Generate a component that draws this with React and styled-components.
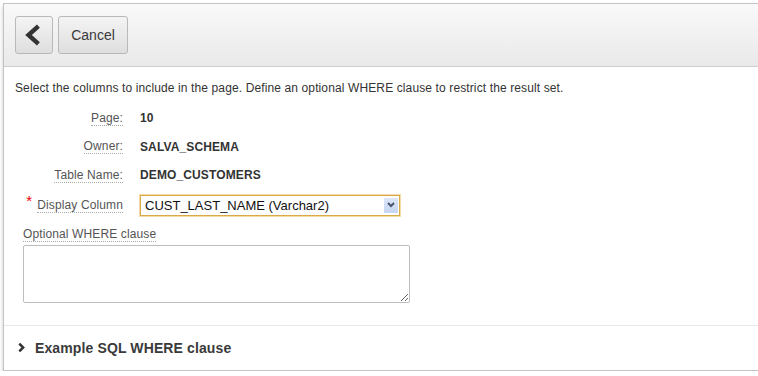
import React from 'react'
import styled, { createGlobalStyle } from 'styled-components'

const Global = createGlobalStyle`
    body {
        margin: 0;
        background: #fff;
        font-family: Arial, "Liberation Sans", sans-serif;
        font-size: 12px;
        letter-spacing: 0.12px;
        color: #333;
    }
`

const Panel = styled.div`
    margin: 3px 0 0 3px;
    border: 1px solid #c4c4c4;
    border-right: none;
    background: #fff;
    box-shadow: 0 3px 4px rgba(0, 0, 0, 0.22);
`

const Header = styled.div`
    display: flex;
    gap: 5px;
    padding: 12px 11px 12px 11px;
    height: 38px;
    background: linear-gradient(#f9f9f9, #e9e9e9);
    border-bottom: 1px solid #cfcfcf;
`

const Button = styled.button`
    display: flex;
    align-items: center;
    justify-content: center;
    height: 38px;
    width: ${(p) => p.w}px;
    padding: 0;
    border: 1px solid #b9b9b9;
    border-radius: 3px;
    background: linear-gradient(#f4f4f4, #dedede);
    font-family: Arial, "Liberation Sans", sans-serif;
    font-size: 14px;
    color: #3a3a3a;
`

const Body = styled.div`
    padding: 14px 11px 22px 11px;
    border-bottom: 1px solid #e8e8e8;
`

const Intro = styled.p`
    margin: 0 0 8px 0;
    line-height: 15px;
    color: #333;
`

const Row = styled.div`
    display: grid;
    grid-template-columns: 108px 1fr;
    column-gap: 17px;
    align-items: center;
    height: ${(p) => p.h || 28.5}px;
`

const Label = styled.div`
    display: flex;
    justify-content: flex-end;
    align-items: flex-start;
    gap: 5px;
    color: #555;
`

const Dotted = styled.span`
    border-bottom: 1px dotted #aaa;
    line-height: 14px;
`

const Star = styled.span`
    color: #e00;
    font-size: 15px;
    line-height: 10px;
    margin-top: -2px;
`

const Value = styled.div`
    font-weight: bold;
    color: #333;
`

const Select = styled.div`
    display: flex;
    align-items: center;
    justify-content: space-between;
    width: 254px;
    height: 19px;
    padding-left: 4px;
    border: 1px solid #d9a94a;
    box-shadow: 0 0 0 1px #f3dca8;
    font-size: 13px;
    letter-spacing: 0;
    color: #111;
`

const Arrow = styled.div`
    display: flex;
    align-items: center;
    justify-content: center;
    width: 14px;
    height: 15px;
    margin-right: 1px;
    background: linear-gradient(#dde6f8, #c6d5f3);
    border-radius: 1px;
`

const Field = styled.div`
    display: flex;
    flex-direction: column;
    align-items: flex-start;
    gap: 3px;
    padding-left: 8px;
    margin-top: 6px;
`

const TextArea = styled.textarea`
    width: 381px;
    height: 52px;
    border: 1px solid #bdbdbd;
    border-radius: 2px;
    padding: 2px;
    resize: both;
`

const Region = styled.div`
    display: flex;
    align-items: center;
    gap: 8px;
    padding: 14px 14px 14px 12px;
    font-size: 14px;
    font-weight: bold;
    color: #3a3a3a;
`

const Chevron = ({ dir, size, w }) => (
    <svg width={size} height={size} viewBox="0 0 20 20">
        <path
            d={dir === 'left' ? 'M14 2 L5 10 L14 18' : 'M6 3 L13 10 L6 17'}
            fill="none"
            stroke="#333"
            strokeWidth={w}
        />
    </svg>
)

const rows = [
    ['Page:', '10'],
    ['Owner:', 'SALVA_SCHEMA'],
    ['Table Name:', 'DEMO_CUSTOMERS'],
]

const App = () => (
    <>
        <Global />
        <Panel>
            <Header>
                <Button w={38}>
                    <Chevron dir="left" size={22} w={4} />
                </Button>
                <Button w={70}>Cancel</Button>
            </Header>
            <Body>
                <Intro>Select the columns to include in the page. Define an optional WHERE clause to restrict the result set.</Intro>
                {rows.map(([l, v]) => (
                    <Row key={l}>
                        <Label><Dotted>{l}</Dotted></Label>
                        <Value>{v}</Value>
                    </Row>
                ))}
                <Row h={31}>
                    <Label><Star>*</Star><Dotted>Display Column</Dotted></Label>
                    <Select>
                        CUST_LAST_NAME (Varchar2)
                        <Arrow>
                            <svg width="8" height="6" viewBox="0 0 8 6">
                                <path d="M1 1 L4 4 L7 1" fill="none" stroke="#4a5670" strokeWidth="2" />
                            </svg>
                        </Arrow>
                    </Select>
                </Row>
                <Field>
                    <Label><Dotted>Optional WHERE clause</Dotted></Label>
                    <TextArea />
                </Field>
            </Body>
            <Region>
                <Chevron dir="right" size={11} w={4.5} />
                Example SQL WHERE clause
            </Region>
        </Panel>
    </>
)

export default App
